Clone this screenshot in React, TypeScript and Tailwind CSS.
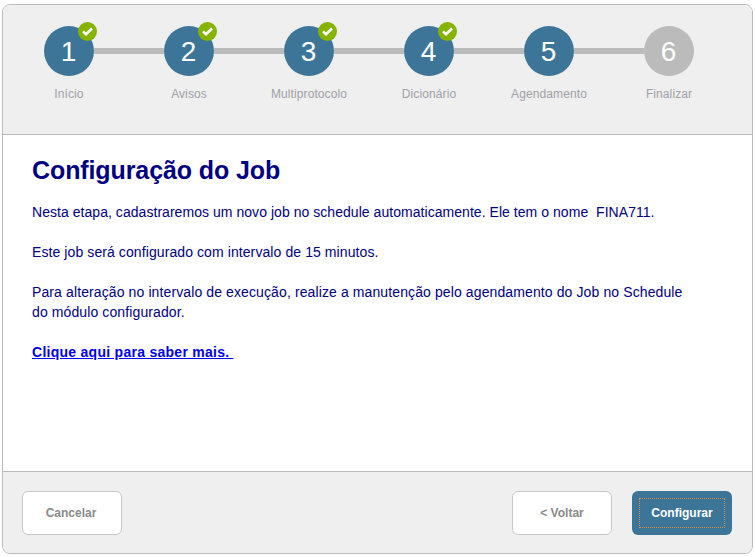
const steps = [
  { n: 1, label: "Início", done: true },
  { n: 2, label: "Avisos", done: true },
  { n: 3, label: "Multiprotocolo", done: true },
  { n: 4, label: "Dicionário", done: true },
  { n: 5, label: "Agendamento", done: false },
  { n: 6, label: "Finalizar", done: false },
];

function Check() {
  return (
    <span className="absolute right-[-3px] top-[-4px] flex h-[19px] w-[19px] items-center justify-center rounded-full bg-[#86b300]">
      <svg width="13" height="11" viewBox="0 0 13 11" fill="none">
        <path d="M2 5.5 L5 8.2 L11 2.5" stroke="#fff" strokeWidth="2.6" />
      </svg>
    </span>
  );
}

function App() {
  return (
    <div className="h-[557px] w-[755px] bg-white pl-[2px] pr-[2px] pt-[4px] font-['Liberation_Sans',Arial,sans-serif]">
      <div className="flex h-[550px] w-[751px] flex-col overflow-hidden rounded-[8px] border border-[#bbbbbb] bg-white">
        <header className="h-[130px] shrink-0 border-b border-[#bbbbbb] bg-[#efefef]">
          <div className="flex items-center pl-[41px] pt-[21px]">
            {steps.map((s, i) => (
              <div key={s.n} className="flex items-center">
                <div
                  className={`relative flex h-[50px] w-[50px] items-center justify-center rounded-full pr-[1px] pt-[2px] text-[28px] font-light leading-none text-white ${
                    s.n === 6 ? "bg-[#bbbbbb]" : "bg-[#3d7599]"
                  }`}
                >
                  {s.n}
                  {s.done && <Check />}
                </div>
                {i < 5 && <div className="h-[6px] w-[70px] bg-[#bbbbbb]" />}
              </div>
            ))}
          </div>
          <div className="grid w-[720px] grid-cols-[repeat(6,120px)] pl-[6px] pt-[11px]">
            {steps.map((s) => (
              <div key={s.n} className="whitespace-nowrap text-center text-[12px] leading-[14px] tracking-[0.1px] text-[#a0a0a8]">
                {s.label}
              </div>
            ))}
          </div>
        </header>
        <main className="flex-1 pl-[29px] pr-[65px] pt-[21px] text-[14px] leading-[20px] text-[#000080]">
          <h1 className="text-[25px] font-bold leading-[28px] tracking-[-0.1px]">Configuração do Job</h1>
          <p className="mt-[18px] tracking-[0.045px]">
            Nesta etapa, cadastraremos um novo job no schedule automaticamente. Ele tem o nome&nbsp; FINA711.
          </p>
          <p className="mt-[20px] tracking-[0.09px]">Este job será configurado com intervalo de 15 minutos.</p>
          <p className="mt-[20px] tracking-[0.11px]">
            Para alteração no intervalo de execução, realize a manutenção pelo agendamento do Job no Schedule do módulo configurador.
          </p>
          <p className="mt-[20px]">
            <a href="#" className="font-bold tracking-[0.27px] text-[#0000ee] underline">
              Clique aqui para saber mais.&nbsp;
            </a>
          </p>
        </main>
        <footer className="flex h-[82px] shrink-0 items-start justify-between border-t border-[#bbbbbb] bg-[#efefef] pl-[19px] pr-[20px] pt-[19px]">
          <button className="h-[44px] w-[100px] rounded-[6px] border border-[#c8c8c8] bg-white pr-[2px] text-[12px] font-bold text-[#8a8a8a]">
            Cancelar
          </button>
          <div className="flex gap-[20px]">
            <button className="h-[44px] w-[100px] rounded-[6px] border border-[#c8c8c8] bg-white text-[12px] font-bold text-[#8a8a8a]">
              &lt; Voltar
            </button>
            <button className="flex h-[44px] w-[100px] items-center justify-center rounded-[6px] bg-[#3d7599] text-[12px] font-bold text-white">
              <span className="flex h-[30px] w-[86px] items-center justify-center border border-dotted border-[#e0903c]">
                Configurar
              </span>
            </button>
          </div>
        </footer>
      </div>
    </div>
  );
}

export default App;
